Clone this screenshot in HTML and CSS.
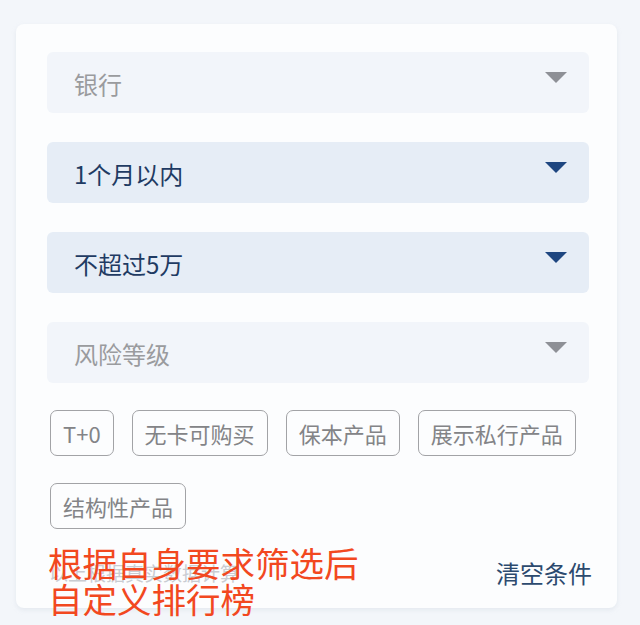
FILE: index.html
```html
<!DOCTYPE html>
<html lang="zh">
<head>
<meta charset="utf-8">
<link rel="stylesheet" href="styles.css">
</head>
<body>
<div class="card">
  <div class="field">
    <span class="label placeholder">银行</span>
    <span class="arrow grey"></span>
  </div>
  <div class="field active">
    <span class="label">1个月以内</span>
    <span class="arrow blue"></span>
  </div>
  <div class="field active">
    <span class="label">不超过5万</span>
    <span class="arrow blue"></span>
  </div>
  <div class="field">
    <span class="label placeholder">风险等级</span>
    <span class="arrow grey"></span>
  </div>
  <div class="tags">
    <span class="tag">T+0</span>
    <span class="tag">无卡可购买</span>
    <span class="tag">保本产品</span>
    <span class="tag">展示私行产品</span>
    <span class="tag">结构性产品</span>
  </div>
  <div class="footer">
    <span class="note">以上根据真实数据计算</span>
    <span class="clear">清空条件</span>
  </div>
  <div class="overlay">根据自身要求筛选后<br>自定义排行榜</div>
</div>
</body>
</html>
```

FILE: styles.css
```css
html, body {
  margin: 0;
  padding: 0;
  background: #f3f6fa;
  font-family: "Noto Sans CJK SC", "Noto Sans", sans-serif;
}
body {
  width: 640px;
  height: 625px;
  overflow: hidden;
}
.card {
  position: relative;
  margin: 24px 0 0 16px;
  width: 601px;
  height: 584px;
  box-sizing: border-box;
  padding: 28px 28px 0 31px;
  background: #fcfdfe;
  border-radius: 8px;
  box-shadow: 0 2px 4px rgba(200, 208, 220, 0.35);
  display: flex;
  flex-direction: column;
}
.field {
  height: 61px;
  border-radius: 6px;
  background: #f2f5fa;
  display: flex;
  align-items: center;
  justify-content: space-between;
  padding: 0 22px 0 27px;
  margin-bottom: 29px;
}
.field.active {
  background: #e6edf6;
}
.label {
  font-size: 24px;
  color: #1f3b63;
  padding-top: 2px;
}
.label.placeholder {
  color: #9a9b9e;
}
.arrow {
  width: 0;
  height: 0;
  border-left: 11px solid transparent;
  border-right: 11px solid transparent;
  border-top: 11px solid #8e9096;
  align-self: flex-start;
  margin-top: 20px;
}
.arrow.blue {
  border-top-color: #1e4680;
}
.tags {
  display: flex;
  flex-wrap: wrap;
  column-gap: 18px;
  row-gap: 27px;
  margin-top: -2px;
  padding-left: 3px;
}
.tag {
  height: 46px;
  box-sizing: border-box;
  border: 1.5px solid #a2a3a6;
  border-radius: 7px;
  padding: 0 12px;
  font-size: 22px;
  color: #838487;
  display: flex;
  align-items: center;
}
.footer {
  display: flex;
  justify-content: space-between;
  align-items: center;
  margin-top: 26px;
  padding-left: 2px;
}
.note {
  font-size: 19px;
  color: #c9ccd2;
}
.clear {
  font-size: 24px;
  color: #2c4a6e;
  margin-right: -3px;
}
.overlay {
  position: absolute;
  left: 32px;
  top: 520px;
  font-size: 34.5px;
  line-height: 36px;
  color: #f2481f;
}
```
